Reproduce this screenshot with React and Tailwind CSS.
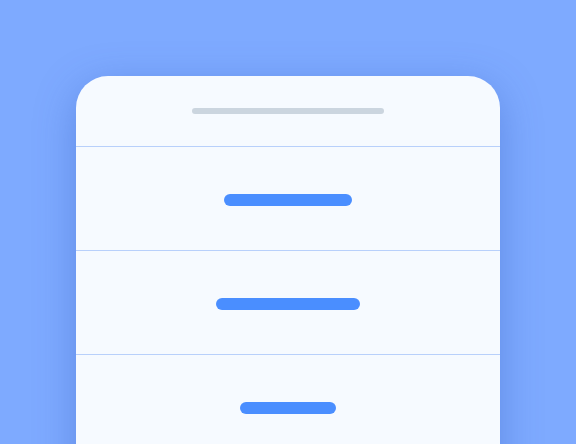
export default function App() {
  const rows = [128, 144, 96];
  return (
    <div className="h-[444px] w-[576px] overflow-hidden bg-[#7eaaff] pt-[76px] font-['Liberation_Sans',sans-serif]">
      <div className="mx-auto w-[424px] h-[420px] rounded-t-[32px] bg-[#f6faff] shadow-[0_10px_40px_rgba(40,80,180,0.35)]">
        <div className="flex h-[70px] justify-center pt-[32px]">
          <div className="h-[6px] w-[192px] rounded-full bg-[#cbd5df]" />
        </div>
        {rows.map((w, i) => (
          <div key={i} className="flex h-[104px] justify-center border-t border-[#b8d0fb] pt-[47px]">
            <div className="h-[12px] rounded-full bg-[#4a8eff]" style={{ width: w }} />
          </div>
        ))}
      </div>
    </div>
  );
}
